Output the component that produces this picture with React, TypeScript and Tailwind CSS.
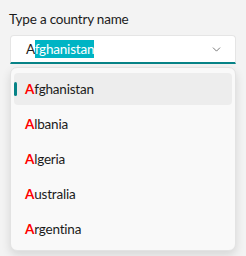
import { ChevronDown } from "lucide-react";

const countries = ["Afghanistan", "Albania", "Algeria", "Australia", "Argentina"];

export default function App() {
  return (
    <div
      className="w-[246px] h-[256px] bg-[#f3f3f3] text-[#1b1b1b] text-[13.5px] tracking-[-0.2px] pt-[9px]"
      style={{ fontFamily: 'Lato, "Open Sans", sans-serif' }}
    >
      <div className="pl-[9px] leading-[20px]">Type a country name</div>
      <div className="mx-[10px] mt-[6px] h-[29px] bg-white rounded-t-[4px] border border-[#e5e5e5] border-b-2 border-b-[#078387] flex items-center pl-[15px] pr-[12px]">
        <span className="leading-[20px]">
          A<span className="bg-[#00b4c4] text-white py-[1px]">fghanistan</span>
        </span>
        <ChevronDown className="ml-auto text-[#5c5c5c]" size={13} strokeWidth={1.5} />
      </div>
      <div className="mx-[10px] mt-[3px] h-[184px] bg-[#f9f9f9] rounded-[7px] border border-[#e3e3e3] shadow-[0_4px_10px_rgba(0,0,0,0.12)] px-[3px] pt-[5px] flex flex-col gap-[3px]">
        {countries.map((c, i) => (
          <div
            key={c}
            className={`relative h-[32px] rounded-[4px] flex items-center pl-[11px] ${i === 0 ? "bg-[#ededed]" : ""}`}
          >
            {i === 0 && <div className="absolute left-0 top-[9px] w-[3px] h-[14px] rounded-full bg-[#078387]" />}
            <span className="font-bold text-[#ff0000]">A</span>
            <span>{c.slice(1)}</span>
          </div>
        ))}
      </div>
    </div>
  );
}
